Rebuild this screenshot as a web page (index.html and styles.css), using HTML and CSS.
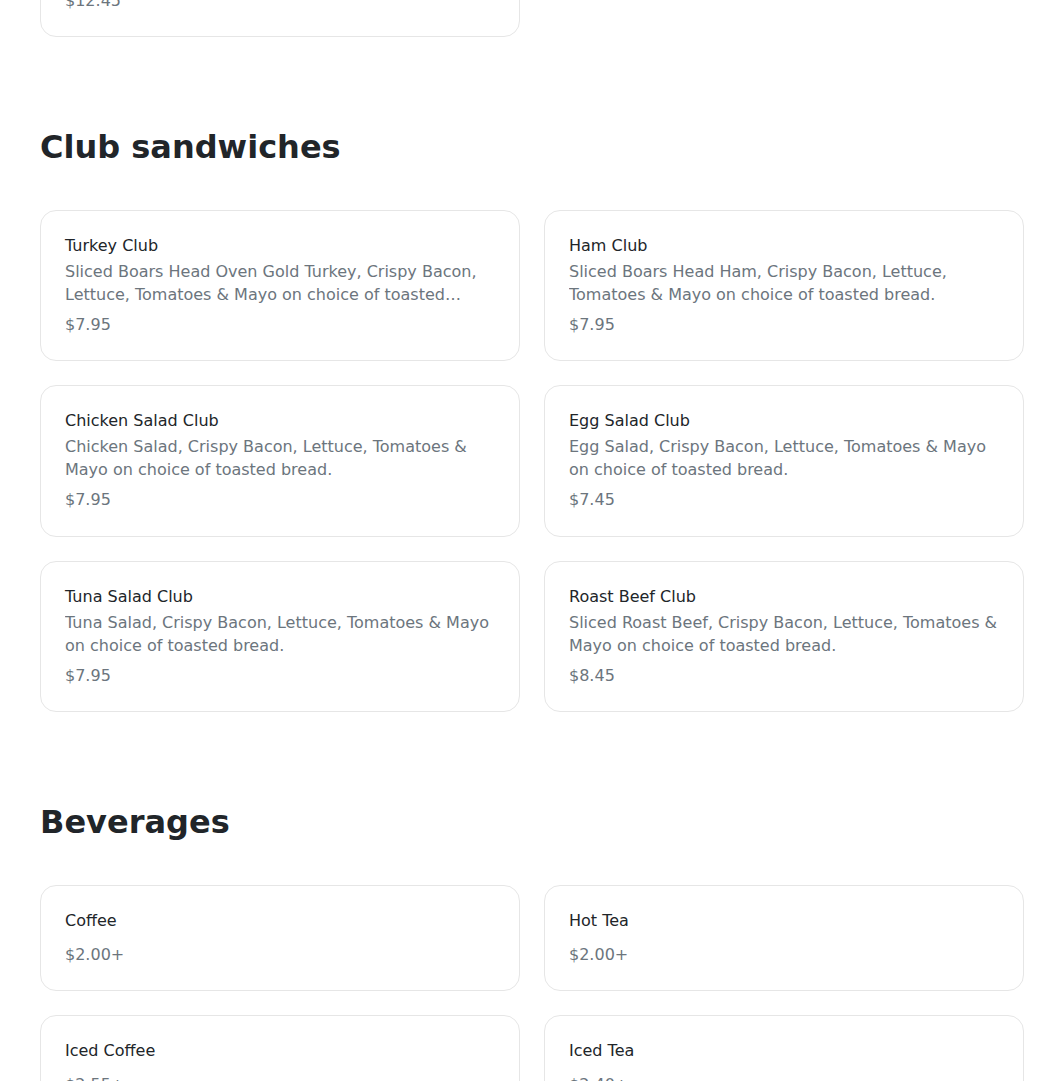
FILE: index.html
```html
<!DOCTYPE html>
<html lang="en">
<head>
<meta charset="utf-8">
<title>Menu</title>
<link rel="stylesheet" href="styles.css">
</head>
<body>
<main class="menu">
  <section class="section section-prev">
    <div class="grid">
      <div class="card">
        <div class="item-name">Item</div>
        <div class="item-price">$12.45</div>
      </div>
    </div>
  </section>

  <section class="section">
    <h2 class="section-title">Club sandwiches</h2>
    <div class="grid">
      <div class="card">
        <div class="item-name">Turkey Club</div>
        <div class="item-desc">Sliced Boars Head Oven Gold Turkey, Crispy Bacon, Lettuce, Tomatoes &amp; Mayo on choice of toasted bread.</div>
        <div class="item-price">$7.95</div>
      </div>
      <div class="card">
        <div class="item-name">Ham Club</div>
        <div class="item-desc">Sliced Boars Head Ham, Crispy Bacon, Lettuce, Tomatoes &amp; Mayo on choice of toasted bread.</div>
        <div class="item-price">$7.95</div>
      </div>
      <div class="card">
        <div class="item-name">Chicken Salad Club</div>
        <div class="item-desc">Chicken Salad, Crispy Bacon, Lettuce, Tomatoes &amp; Mayo on choice of toasted bread.</div>
        <div class="item-price">$7.95</div>
      </div>
      <div class="card">
        <div class="item-name">Egg Salad Club</div>
        <div class="item-desc">Egg Salad, Crispy Bacon, Lettuce, Tomatoes &amp; Mayo on choice of toasted bread.</div>
        <div class="item-price">$7.45</div>
      </div>
      <div class="card">
        <div class="item-name">Tuna Salad Club</div>
        <div class="item-desc">Tuna Salad, Crispy Bacon, Lettuce, Tomatoes &amp; Mayo on choice of toasted bread.</div>
        <div class="item-price">$7.95</div>
      </div>
      <div class="card">
        <div class="item-name">Roast Beef Club</div>
        <div class="item-desc">Sliced Roast Beef, Crispy Bacon, Lettuce, Tomatoes &amp; Mayo on choice of toasted bread.</div>
        <div class="item-price">$8.45</div>
      </div>
    </div>
  </section>

  <section class="section">
    <h2 class="section-title">Beverages</h2>
    <div class="grid">
      <div class="card">
        <div class="item-name">Coffee</div>
        <div class="item-price">$2.00+</div>
      </div>
      <div class="card">
        <div class="item-name">Hot Tea</div>
        <div class="item-price">$2.00+</div>
      </div>
      <div class="card">
        <div class="item-name">Iced Coffee</div>
        <div class="item-price">$2.55+</div>
      </div>
      <div class="card">
        <div class="item-name">Iced Tea</div>
        <div class="item-price">$2.40+</div>
      </div>
    </div>
  </section>
</main>
</body>
</html>
```

FILE: styles.css
```css
html, body {
  margin: 0;
  padding: 0;
  background: #ffffff;
}

body {
  font-family: "DejaVu Sans", "Liberation Sans", sans-serif;
  color: #212529;
  font-size: 16px;
  overflow: hidden;
}

.menu {
  display: flex;
  flex-direction: column;
  gap: 90.5px;
  padding: 0 20px 0 40px;
  margin-top: -69.5px;
}

.section-title {
  margin: 0 0 44px;
  font-size: 32px;
  line-height: 38px;
  font-weight: 700;
  color: #212529;
}

.grid {
  display: grid;
  grid-template-columns: 480px 480px;
  gap: 24px;
}

.card {
  border: 1px solid #e6e6e6;
  border-radius: 16px;
  padding: 23px 24px 23.5px;
  display: flex;
  flex-direction: column;
  background: #fff;
}

.item-name {
  font-size: 16px;
  line-height: 24px;
  color: #212529;
  margin-bottom: 2px;
}

.item-desc {
  font-size: 16px;
  line-height: 23px;
  color: #6c757d;
  display: -webkit-box;
  -webkit-line-clamp: 2;
  -webkit-box-orient: vertical;
  overflow: hidden;
}

.item-price {
  margin-top: 8px;
  font-size: 16px;
  line-height: 24px;
  color: #6c757d;
}

.item-desc + .item-price {
  margin-top: 7px;
}
```
